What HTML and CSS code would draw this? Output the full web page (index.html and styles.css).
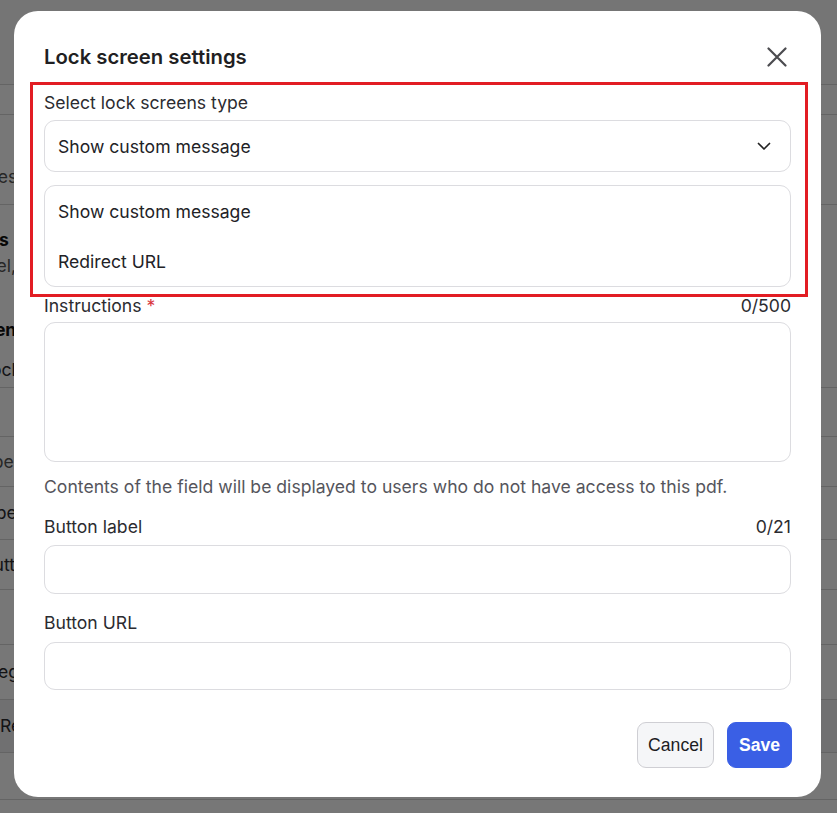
FILE: index.html
```html
<!DOCTYPE html>
<html lang="en">
<head>
<meta charset="utf-8">
<title>Lock screen settings</title>
<link rel="stylesheet" href="styles.css">
</head>
<body>
<div class="page">
  <div class="page-top"></div>
  <div class="page-row h30"></div>
  <div class="page-row h90 bottom"><span class="frag muted o1">Legal pages</span></div>
  <div class="page-row h183 stack">
    <span class="frag bold o2">Settings</span>
    <span class="frag muted o3">Label, link</span>
    <span class="frag bold o4">Lock screen</span>
    <span class="frag o5">Lock</span>
  </div>
  <div class="page-row h49"></div>
  <div class="page-row h50"><span class="frag muted o6">Labels:</span></div>
  <div class="page-row h53"><span class="frag o7">Label</span></div>
  <div class="page-row h50"><span class="frag o8">Button</span></div>
  <div class="page-row h55"></div>
  <div class="page-row h55"><span class="frag o9">Legal</span></div>
  <div class="page-row h53 shade"><span class="frag o10">Redirect</span></div>
  <div class="page-row h47"></div>
</div>

<div class="overlay">
  <div class="modal">
    <div class="modal-header">
      <h2 class="modal-title">Lock screen settings</h2>
      <button class="close-btn" aria-label="Close">
        <svg width="20" height="20" viewBox="0 0 20 20"><path d="M1.5 1.5 L18.5 18.5 M18.5 1.5 L1.5 18.5" stroke="#4b4b4f" stroke-width="2.2" stroke-linecap="round" fill="none"/></svg>
      </button>
    </div>

    <div class="select-area">
      <div class="field-label">Select lock screens type</div>
      <div class="select-box">
        <span>Show custom message</span>
        <svg class="chev" width="14" height="9" viewBox="0 0 14 9"><path d="M1.5 1.5 L7 7 L12.5 1.5" stroke="#222" stroke-width="1.7" fill="none" stroke-linecap="round" stroke-linejoin="round"/></svg>
      </div>
      <ul class="options">
        <li>Show custom message</li>
        <li>Redirect URL</li>
      </ul>
      <div class="highlight"></div>
    </div>

    <div class="field-label row-label instr"><span>Instructions <span class="req">*</span></span><span>0/500</span></div>
    <div class="textarea"></div>
    <p class="help">Contents of the field will be displayed to users who do not have access to this pdf.</p>

    <div class="field-label row-label lbl2"><span>Button label</span><span>0/21</span></div>
    <div class="input i1"></div>

    <div class="field-label lbl3">Button URL</div>
    <div class="input i2"></div>

    <div class="actions">
      <button class="btn cancel">Cancel</button>
      <button class="btn save">Save</button>
    </div>
  </div>
</div>
</body>
</html>
```

FILE: styles.css
```css
* { box-sizing: border-box; }
html, body { margin: 0; padding: 0; }
body {
  width: 837px;
  height: 813px;
  overflow: hidden;
  background: #fff;
  font-family: Inter, "Noto Sans", sans-serif;
  color: #2b2b2f;
}

/* background page */
.page { width: 837px; }
.page-top { height: 85px; border-bottom: 1px solid #d6d6d6; background: #fafafa; }
.page-row {
  border-bottom: 1px solid #d6d6d6;
  font-size: 17.6px;
  line-height: 22px;
  overflow: hidden;
  white-space: nowrap;
  display: flex;
  align-items: center;
}
.page-row.bottom { align-items: flex-end; padding-bottom: 16px; }
.page-row.stack { flex-direction: column; align-items: flex-start; justify-content: flex-start; padding-top: 24px; }
.h30 { height: 30px; }
.h90 { height: 90px; }
.h183 { height: 183px; }
.h49 { height: 49px; }
.h50 { height: 50px; }
.h53 { height: 53px; }
.h55 { height: 55px; }
.h47 { height: 47px; }
.shade { background: #f0f0f3; }
.frag { display: block; }
.bold { font-weight: 700; color: #111; }
.muted { color: #555; }
.o1 { margin-left: -84px; }
.o2 { margin-left: -62px; }
.o3 { margin-left: -34px; margin-top: 4px; }
.o4 { margin-left: -88px; margin-top: 42px; }
.o5 { margin-left: -19px; margin-top: 18px; }
.o6 { margin-left: -27px; }
.o7 { margin-left: -24px; }
.o8 { margin-left: -18px; }
.o9 { margin-left: -12px; }
.o10 { margin-left: 0px; }

/* overlay + modal */
.overlay {
  position: fixed;
  inset: 0;
  background: rgba(0, 0, 0, 0.535);
  padding: 11px 16px 16px 14px;
  display: flex;
}
.modal {
  flex: 1;
  background: #fff;
  border-radius: 24px;
  padding: 32px 30px 29px 30px;
  display: flex;
  flex-direction: column;
}
.modal-header {
  display: flex;
  align-items: center;
  justify-content: space-between;
  height: 28px;
}
.modal-title {
  margin: 0;
  font-size: 20.3px;
  line-height: 28px;
  font-weight: 600;
  color: #1f1f23;
}
.close-btn {
  border: 0;
  background: none;
  padding: 0;
  width: 20px;
  height: 20px;
  margin-right: 4px;
  display: flex;
}

.field-label {
  font-size: 17.6px;
  line-height: 22px;
  color: #2b2b30;
}
.row-label { display: flex; justify-content: space-between; }
.req { color: #d9363e; }

.select-area { position: relative; margin-top: 21px; }
.select-box {
  margin-top: 6px;
  height: 52px;
  border: 1px solid #dcdce0;
  border-radius: 11px;
  padding: 0 19px 0 13px;
  display: flex;
  align-items: center;
  justify-content: space-between;
  font-size: 17.6px;
  color: #222226;
}
.options {
  list-style: none;
  margin: 13px 0 0;
  padding: 0;
  border: 1px solid #dcdce0;
  border-radius: 11px;
  font-size: 17.6px;
  color: #222226;
}
.options li {
  height: 50px;
  display: flex;
  align-items: center;
  padding-left: 13px;
}
.highlight {
  position: absolute;
  left: -14px;
  right: -17px;
  top: -10px;
  bottom: -10px;
  border: 3.5px solid #e21d23;
  pointer-events: none;
}

.instr { margin-top: 8px; }
.textarea {
  margin-top: 5px;
  height: 140px;
  border: 1px solid #dcdce0;
  border-radius: 11px;
}
.help {
  margin: 14px 0 0;
  font-size: 17.6px;
  line-height: 22px;
  color: #55555c;
}
.lbl2 { margin-top: 18px; }
.input {
  height: 49px;
  border: 1px solid #dcdce0;
  border-radius: 11px;
}
.i1 { margin-top: 7px; }
.lbl3 { margin-top: 18px; }
.i2 { margin-top: 8px; height: 48px; }

.actions {
  margin-top: 32px;
  display: flex;
  justify-content: flex-end;
  gap: 13px;
}
.btn {
  height: 46px;
  border-radius: 9px;
  font-family: "Liberation Sans", Arial, sans-serif;
  font-size: 17.6px;
  padding: 0;
}
.cancel {
  width: 77px;
  background: #f5f6f8;
  border: 1px solid #cfcfd4;
  color: #1d1d1f;
}
.save {
  width: 65px;
  margin-right: -1px;
  background: #3a5fe5;
  border: 1px solid #3a5fe5;
  color: #fff;
  font-weight: 700;
}
```
